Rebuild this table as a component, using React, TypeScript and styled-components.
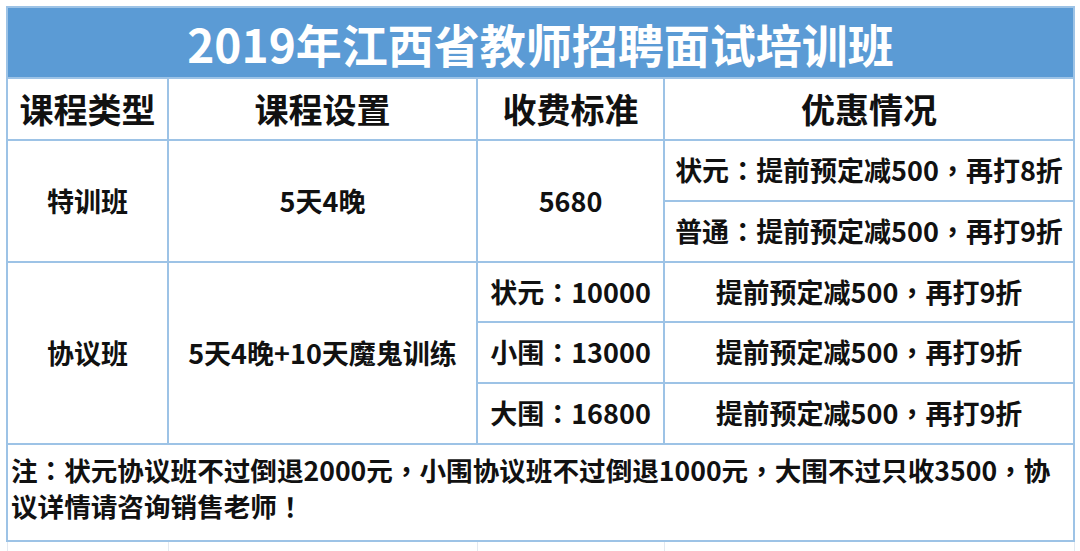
import React from "react";
import styled, { createGlobalStyle } from "styled-components";

const GlobalStyle = createGlobalStyle`
  html, body {
    margin: 0;
    padding: 0;
    background: #ffffff;
  }
  body {
    font-family: "Noto Sans CJK SC", "Noto Sans", sans-serif;
    font-weight: 700;
    color: #111111;
  }
`;

const Page = styled.div`
  padding: 6px 7px 0 6px;
`;

const Table = styled.table`
  width: 1067px;
  border-collapse: collapse;
  table-layout: fixed;
`;

const Cell = styled.td<{ $align?: "left" | "center"; $h?: number }>`
  border: 2px solid #9dc3e6;
  text-align: ${(p) => p.$align ?? "center"};
  vertical-align: middle;
  padding: 0;
  height: ${(p) => (p.$h ? `${p.$h}px` : "auto")};
  font-size: 27px;
  line-height: 1.2;
  white-space: nowrap;
`;

const TitleCell = styled(Cell)`
  background: #5b9bd5;
  color: #ffffff;
  font-size: 46px;
  line-height: 1;
`;

const HeadCell = styled(Cell)`
  font-size: 34px;
  line-height: 1;
`;

const NoteCell = styled(Cell)`
  font-size: 26.6px;
  line-height: 36px;
  padding: 0 0 10px 3px;
`;

const NoteLine = styled.div`
  white-space: nowrap;
`;

// full-width punctuation sits centred in its em box, as in the source image
const Punct = styled.span`
  font-family: "Noto Sans CJK TC", "Noto Sans CJK SC", sans-serif;
`;

const FaintCell = styled.td`
  border: 1px solid #e3e9f0;
  border-top: none;
  height: 13px;
  padding: 0;
`;

function P({ text }: { text: string }) {
  const parts = text.split(/([：，！])/);
  return (
    <>
      {parts.map((s, i) =>
        /^[：，！]$/.test(s) ? <Punct key={i}>{s}</Punct> : s
      )}
    </>
  );
}

const prices = ["状元：10000", "小围：13000", "大围：16800"];

export default function App() {
  return (
    <Page>
      <GlobalStyle />
      <Table>
        <colgroup>
          <col style={{ width: 161 }} />
          <col style={{ width: 309 }} />
          <col style={{ width: 187 }} />
          <col style={{ width: 410 }} />
        </colgroup>
        <tbody>
          <tr>
            <TitleCell colSpan={4} $h={69}>
              2019年江西省教师招聘面试培训班
            </TitleCell>
          </tr>
          <tr>
            <HeadCell $h={60}>课程类型</HeadCell>
            <HeadCell>课程设置</HeadCell>
            <HeadCell>收费标准</HeadCell>
            <HeadCell>优惠情况</HeadCell>
          </tr>
          <tr>
            <Cell rowSpan={2}>特训班</Cell>
            <Cell rowSpan={2}>5天4晚</Cell>
            <Cell rowSpan={2}>5680</Cell>
            <Cell $h={59}>
              <P text="状元：提前预定减500，再打8折" />
            </Cell>
          </tr>
          <tr>
            <Cell $h={59}>
              <P text="普通：提前预定减500，再打9折" />
            </Cell>
          </tr>
          {prices.map((label, i) => (
            <tr key={label}>
              {i === 0 && (
                <>
                  <Cell rowSpan={3}>协议班</Cell>
                  <Cell rowSpan={3}>5天4晚+10天魔鬼训练</Cell>
                </>
              )}
              <Cell $h={i === 0 ? 58 : 59}>
                <P text={label} />
              </Cell>
              <Cell>
                <P text="提前预定减500，再打9折" />
              </Cell>
            </tr>
          ))}
          <tr>
            <NoteCell colSpan={4} $align="left" $h={85}>
              <NoteLine>
                <P text="注：状元协议班不过倒退2000元，小围协议班不过倒退1000元，大围不过只收3500，协" />
              </NoteLine>
              <NoteLine>
                <P text="议详情请咨询销售老师！" />
              </NoteLine>
            </NoteCell>
          </tr>
          <tr>
            <FaintCell />
            <FaintCell />
            <FaintCell />
            <FaintCell />
          </tr>
        </tbody>
      </Table>
    </Page>
  );
}
